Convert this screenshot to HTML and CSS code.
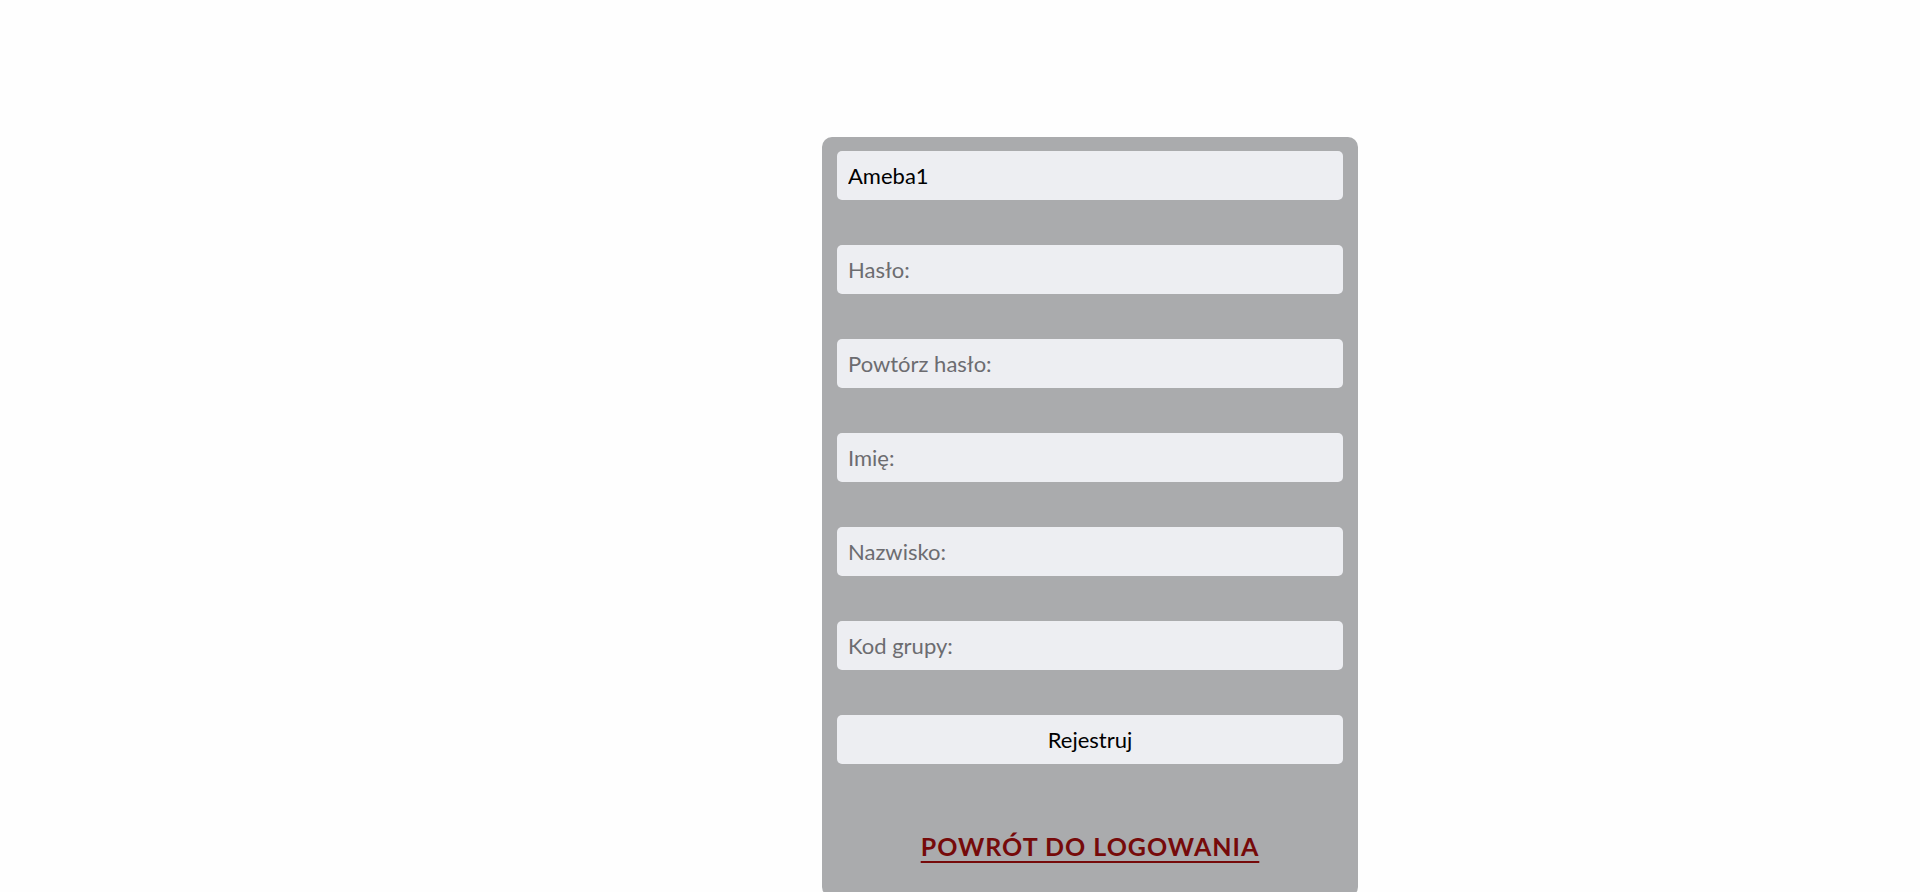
FILE: index.html
```html
<!DOCTYPE html>
<html lang="pl">
<head>
<meta charset="utf-8">
<title>Rejestracja</title>
<link rel="stylesheet" href="styles.css">
</head>
<body>
<main class="page">
  <form class="panel">
    <input class="field" type="text" value="Ameba1">
    <input class="field" type="password" placeholder="Hasło:">
    <input class="field" type="password" placeholder="Powtórz hasło:">
    <input class="field" type="text" placeholder="Imię:">
    <input class="field" type="text" placeholder="Nazwisko:">
    <input class="field" type="text" placeholder="Kod grupy:">
    <button class="field button" type="button">Rejestruj</button>
    <div class="back"><a href="#" class="back-link">POWRÓT DO LOGOWANIA</a></div>
  </form>
</main>
</body>
</html>
```
FILE: styles.css
```css
html, body {
  margin: 0;
  padding: 0;
  background: #fefefe;
}
body {
  font-family: Lato, "Open Sans", sans-serif;
  overflow: hidden;
}
.page {
  padding: 137px 0 0 822px;
}
.panel {
  width: 536px;
  box-sizing: border-box;
  padding: 14px 15px 0;
  min-height: 760px;
  background: #aaabad;
  border-radius: 10px;
  display: flex;
  flex-direction: column;
  gap: 45px;
}
.field {
  display: block;
  width: 100%;
  height: 49px;
  box-sizing: border-box;
  margin: 0;
  border: none;
  border-radius: 5px;
  background: #edeef2;
  padding: 0 11px;
  font-family: Lato, "Open Sans", sans-serif;
  font-size: 22px;
  color: #000;
  outline: none;
}
.field::placeholder {
  color: #6c6c70;
}
.button {
  text-align: center;
  cursor: pointer;
}
.back {
  text-align: center;
  padding-top: 22px;
}
.back-link {
  font-weight: bold;
  font-size: 25px;
  letter-spacing: 1px;
  color: #760a0a;
  text-decoration: underline;
  text-decoration-thickness: 2px;
  text-underline-offset: 5px;
}
```
